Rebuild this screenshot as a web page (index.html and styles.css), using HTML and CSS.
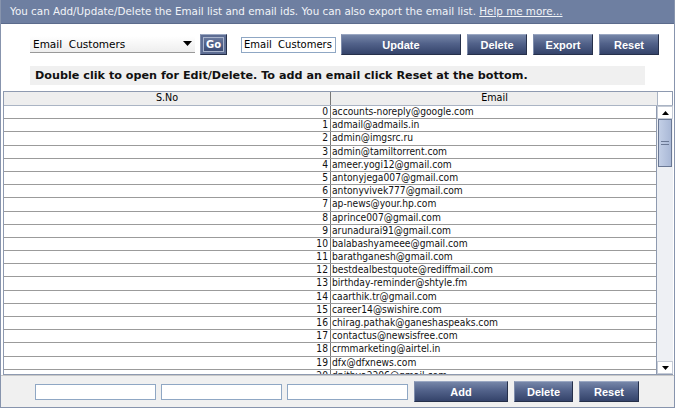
FILE: index.html
```html
<!DOCTYPE html>
<html lang="en">
<head>
    <meta charset="UTF-8">
    <title>Email List</title>
    <link rel="stylesheet" href="styles.css">
</head>
<body>
<div class="panel">
    <div class="topbar">You can Add/Update/Delete the Email list and email ids. You can also export the email list. <a href="#">Help me more...</a></div>

    <div class="toolbar">
        <div class="select">
            <span>Email&nbsp;&nbsp;Customers</span>
            <svg width="9" height="6" viewBox="0 0 9 6"><path d="M0 0 H9 L4.5 5 Z" fill="#000"/></svg>
        </div>
        <button class="btn go">Go</button>
        <input class="field name" type="text" value="Email  Customers">
        <button class="btn w-update">Update</button>
        <button class="btn w-delete">Delete</button>
        <button class="btn w-export">Export</button>
        <button class="btn w-reset">Reset</button>
    </div>

    <div class="hint">Double clik to open for Edit/Delete. To add an email click Reset at the bottom.</div>

    <div class="grid">
        <div class="grid-head">
            <div class="c-sno">S.No</div>
            <div class="c-email">Email</div>
            <div class="c-sb"></div>
        </div>
        <div class="grid-body">
            <div class="rows">
                <div class="row"><div class="c-sno">0</div><div class="c-email">accounts-noreply@google.com</div></div>
                <div class="row"><div class="c-sno">1</div><div class="c-email">admail@admails.in</div></div>
                <div class="row"><div class="c-sno">2</div><div class="c-email">admin@imgsrc.ru</div></div>
                <div class="row"><div class="c-sno">3</div><div class="c-email">admin@tamiltorrent.com</div></div>
                <div class="row"><div class="c-sno">4</div><div class="c-email">ameer.yogi12@gmail.com</div></div>
                <div class="row"><div class="c-sno">5</div><div class="c-email">antonyjega007@gmail.com</div></div>
                <div class="row"><div class="c-sno">6</div><div class="c-email">antonyvivek777@gmail.com</div></div>
                <div class="row"><div class="c-sno">7</div><div class="c-email">ap-news@your.hp.com</div></div>
                <div class="row"><div class="c-sno">8</div><div class="c-email">aprince007@gmail.com</div></div>
                <div class="row"><div class="c-sno">9</div><div class="c-email">arunadurai91@gmail.com</div></div>
                <div class="row"><div class="c-sno">10</div><div class="c-email">balabashyameee@gmail.com</div></div>
                <div class="row"><div class="c-sno">11</div><div class="c-email">barathganesh@gmail.com</div></div>
                <div class="row"><div class="c-sno">12</div><div class="c-email">bestdealbestquote@rediffmail.com</div></div>
                <div class="row"><div class="c-sno">13</div><div class="c-email">birthday-reminder@shtyle.fm</div></div>
                <div class="row"><div class="c-sno">14</div><div class="c-email">caarthik.tr@gmail.com</div></div>
                <div class="row"><div class="c-sno">15</div><div class="c-email">career14@swishire.com</div></div>
                <div class="row"><div class="c-sno">16</div><div class="c-email">chirag.pathak@ganeshaspeaks.com</div></div>
                <div class="row"><div class="c-sno">17</div><div class="c-email">contactus@newsisfree.com</div></div>
                <div class="row"><div class="c-sno">18</div><div class="c-email">crmmarketing@airtel.in</div></div>
                <div class="row"><div class="c-sno">19</div><div class="c-email">dfx@dfxnews.com</div></div>
                <div class="row"><div class="c-sno">20</div><div class="c-email">dpithya2206@gmail.com</div></div>
            </div>
            <div class="scrollbar">
                <div class="sb-btn"><svg width="7" height="4" viewBox="0 0 7 4"><path d="M0 4 H7 L3.5 0 Z" fill="#000"/></svg></div>
                <div class="sb-track">
                    <div class="sb-thumb"><i></i><i></i></div>
                </div>
                <div class="sb-btn"><svg width="7" height="4" viewBox="0 0 7 4"><path d="M0 0 H7 L3.5 4 Z" fill="#000"/></svg></div>
            </div>
        </div>
    </div>

    <div class="bottombar">
        <input class="field add" type="text">
        <input class="field add" type="text">
        <input class="field add" type="text">
        <button class="btn w-add">Add</button>
        <button class="btn w-delete2">Delete</button>
        <button class="btn w-reset">Reset</button>
    </div>
</div>
</body>
</html>
```

FILE: styles.css
```css
body {
    margin: 0;
    background-color: #fff;
    font-family: "DejaVu Sans", Verdana, sans-serif;
    font-size: 10px;
}

.panel {
    width: 675px;
    height: 408px;
    box-sizing: border-box;
    border: 1px solid #8794ad;
    border-top: none;
    display: flex;
    flex-direction: column;
    overflow: hidden;
}

.topbar {
    height: 24px;
    line-height: 22px;
    padding-left: 9px;
    background-color: #6e7fa1;
    color: #f2f4f8;
    border-bottom: 1px solid #5b6b8c;
    box-sizing: border-box;
    white-space: nowrap;
    font-size: 10.35px;
}
.topbar a {
    color: #f2f4f8;
    text-decoration: underline;
}

.toolbar {
    display: flex;
    align-items: center;
    height: 21px;
    margin-top: 10px;
    padding-left: 29px;
}

.select {
    width: 165px;
    height: 17px;
    box-sizing: border-box;
    background: linear-gradient(#ffffff, #eeeeee);
    border-bottom: 1px solid #999;
    display: flex;
    align-items: center;
    justify-content: space-between;
    padding: 0 3px 0 3px;
    font-size: 10.5px;
    color: #000;
}

.btn {
    height: 21px;
    box-sizing: border-box;
    border: 1px solid #26304a;
    border-top-color: #9aa7c2;
    border-left-color: #7e8cab;
    background: linear-gradient(#7686a8, #52628a 45%, #34436a);
    color: #fff;
    font-family: "Liberation Sans", Arial, sans-serif;
    font-weight: bold;
    font-size: 11px;
    padding: 0;
    margin: 0;
}
.go {
    width: 27px;
    margin-left: 5px;
    box-shadow: inset 0 0 0 2px #5d6d93, inset 0 0 0 3px #a9b4cc;
    font-family: "DejaVu Sans", sans-serif;
    font-size: 10px;
}
.w-update { width: 120px; margin-left: 5px; }
.w-delete { width: 60px; margin-left: 6px; }
.w-export { width: 60px; margin-left: 6px; }
.w-reset { width: 60px; margin-left: 6px; }
.w-add { width: 94px; margin-left: 6px; }
.w-delete2 { width: 59px; margin-left: 6px; }

.field {
    height: 16px;
    box-sizing: border-box;
    border: 1px solid #8fa7c4;
    background: #fff;
    font-family: "DejaVu Sans", sans-serif;
    font-size: 10px;
    padding: 0 2px;
    margin: 0;
    outline: none;
}
.name {
    width: 95px;
    margin-left: 14px;
}

.hint {
    margin: 11px 29px 0 29px;
    height: 19px;
    line-height: 19px;
    padding-left: 5px;
    background-color: #f0f0f0;
    font-weight: bold;
    font-size: 11.2px;
    color: #111;
    white-space: nowrap;
}

.grid {
    margin: 6px 1px 0 2px;
    border: 1px solid #8e9ab0;
    border-right: none;
    display: flex;
    flex-direction: column;
    height: 284px;
    box-sizing: border-box;
}

.grid-head {
    display: flex;
    height: 13px;
    line-height: 12px;
    background-color: #eeeeee;
    border-bottom: 1px solid #aab4c4;
    flex: none;
    font-size: 9.6px;
}
.grid-head .c-sno,
.grid-head .c-email {
    text-align: center;
}
.grid-head .c-sb {
    width: 15px;
    background: #fff;
    border-left: 1px solid #aab4c4;
    border-right: 1px solid #8e9ab0;
}

.c-sno {
    width: 327px;
    border-right: 1px solid #777;
    box-sizing: border-box;
    flex: none;
}
.c-email {
    width: 326px;
    flex: none;
    padding-left: 1px;
    box-sizing: border-box;
    white-space: nowrap;
}

.grid-body {
    display: flex;
    flex: 1;
    overflow: hidden;
}
.rows {
    width: 653px;
    overflow: hidden;
}
.row {
    display: flex;
    height: 13.2px;
    line-height: 12px;
    border-bottom: 1px solid #9b9b9b;
    box-sizing: border-box;
    color: #111;
    font-family: "DejaVu Sans Condensed", "DejaVu Sans", sans-serif;
    font-size: 10.2px;
}
.row .c-sno {
    text-align: right;
    padding-right: 2px;
}

.scrollbar {
    width: 17px;
    display: flex;
    flex-direction: column;
    background-color: #eef0f4;
    border-left: 1px solid #8e9ab0;
    box-sizing: border-box;
}
.sb-btn {
    height: 13px;
    flex: none;
    display: flex;
    align-items: center;
    justify-content: center;
    background: #fff;
    border: 1px solid #c5cbd6;
    box-sizing: border-box;
}
.sb-track {
    flex: 1;
}
.sb-thumb {
    height: 46px;
    margin: 0 1px 0 1px;
    background: linear-gradient(90deg, #c3cfe6, #a9b8d6);
    border: 1px solid #6a7894;
    display: flex;
    flex-direction: column;
    justify-content: center;
    align-items: center;
    gap: 2px;
}
.sb-thumb i {
    display: block;
    width: 8px;
    height: 1px;
    background: #6a7894;
}

.bottombar {
    flex: 1;
    display: flex;
    align-items: center;
    padding-left: 34px;
    background-color: #f0f0f0;
    border-top: 1px solid #c8c8c8;
}
.add {
    width: 121px;
    margin-right: 5px;
}
.bottombar .w-add {
    margin-left: 1px;
}
```
